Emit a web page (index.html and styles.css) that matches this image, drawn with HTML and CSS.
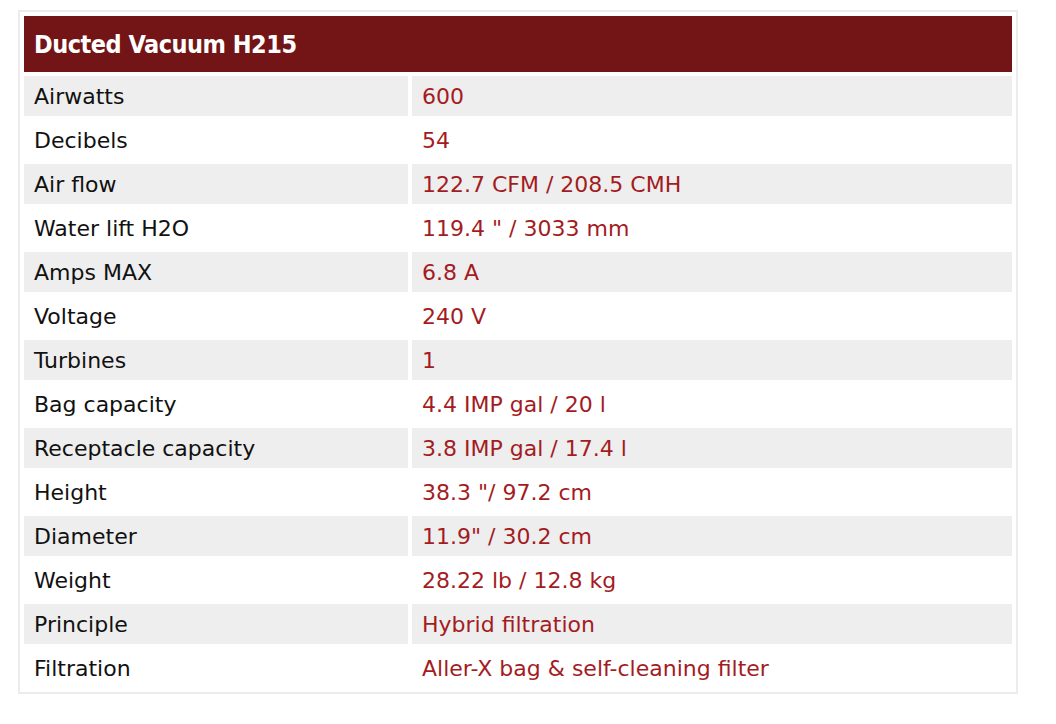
FILE: index.html
```html
<!DOCTYPE html>
<html>
<head>
<meta charset="utf-8">
<link rel="stylesheet" href="styles.css">
</head>
<body>
<div class="page">
<table class="specs">
  <thead>
    <tr><th colspan="2">Ducted Vacuum H215</th></tr>
  </thead>
  <tbody>
    <tr><td class="label">Airwatts</td><td class="value">600</td></tr>
    <tr><td class="label">Decibels</td><td class="value">54</td></tr>
    <tr><td class="label">Air flow</td><td class="value">122.7 CFM / 208.5 CMH</td></tr>
    <tr><td class="label">Water lift H2O</td><td class="value">119.4 " / 3033 mm</td></tr>
    <tr><td class="label">Amps MAX</td><td class="value">6.8 A</td></tr>
    <tr><td class="label">Voltage</td><td class="value">240 V</td></tr>
    <tr><td class="label">Turbines</td><td class="value">1</td></tr>
    <tr><td class="label">Bag capacity</td><td class="value">4.4 IMP gal / 20 l</td></tr>
    <tr><td class="label">Receptacle capacity</td><td class="value">3.8 IMP gal / 17.4 l</td></tr>
    <tr><td class="label">Height</td><td class="value">38.3 "/ 97.2 cm</td></tr>
    <tr><td class="label">Diameter</td><td class="value">11.9" / 30.2 cm</td></tr>
    <tr><td class="label">Weight</td><td class="value">28.22 lb / 12.8 kg</td></tr>
    <tr><td class="label">Principle</td><td class="value">Hybrid filtration</td></tr>
    <tr><td class="label">Filtration</td><td class="value">Aller-X bag &amp; self-cleaning filter</td></tr>
  </tbody>
</table>
</div>
</body>
</html>
```
FILE: styles.css
```css
html, body {
  margin: 0;
  padding: 0;
  background: #ffffff;
}
.page {
  padding: 10px 0 0 18px;
}
.specs {
  width: 1000px;
  border-collapse: separate;
  border-spacing: 4px;
  border: 2px solid #ececec;
  font-family: "DejaVu Sans", "Open Sans", sans-serif;
  font-size: 22px;
  color: #111111;
}
.specs th {
  background: #731517;
  color: #ffffff;
  height: 56px;
  padding: 0 10px;
  box-sizing: border-box;
  text-align: left;
  font-family: "DejaVu Sans Condensed", "DejaVu Sans", sans-serif;
  font-stretch: condensed;
  font-weight: bold;
  font-size: 25px;
  letter-spacing: -0.5px;
}
.specs td {
  height: 40px;
  padding: 0 10px;
  vertical-align: middle;
  box-sizing: border-box;
}
.specs tbody tr:nth-child(odd) td {
  background: #eeeeee;
}
.specs td.label {
  width: 384px;
}
.specs td.value {
  color: #a31c1f;
}
```
